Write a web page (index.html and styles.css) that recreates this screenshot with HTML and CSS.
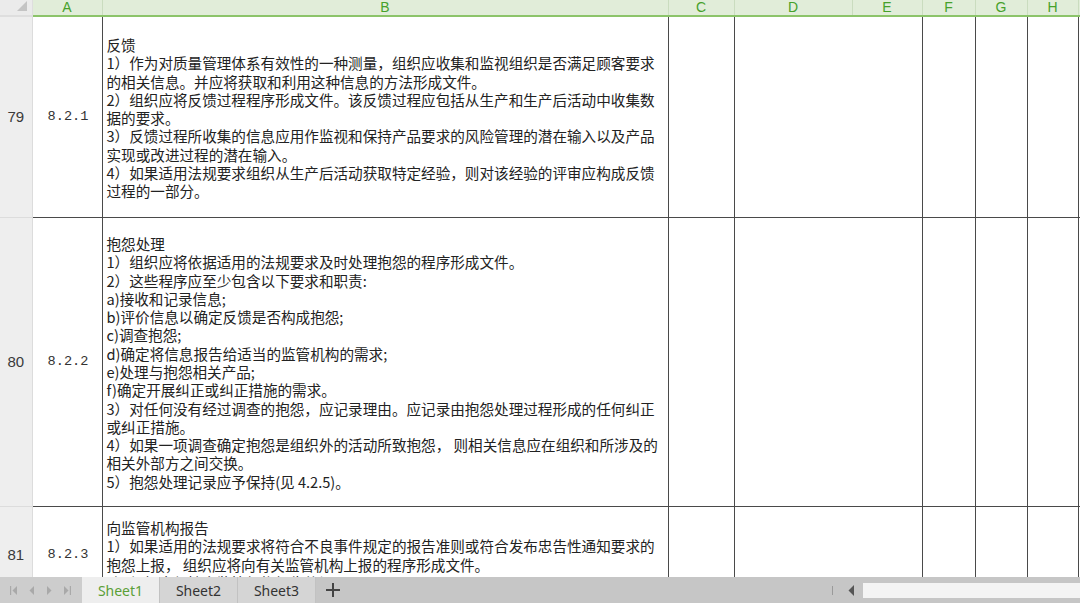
FILE: index.html
```html
<!DOCTYPE html>
<html lang="zh-CN">
<head>
    <meta charset="UTF-8">
    <title>Sheet1</title>
    <link rel="stylesheet" href="styles.css">
</head>
<body>
    <div class="workbook">
        <div class="grid">
            <table class="sheet">
                <colgroup>
                    <col class="w-rh">
                    <col class="w-a">
                    <col class="w-b">
                    <col class="w-c">
                    <col class="w-d">
                    <col class="w-e">
                    <col class="w-f">
                    <col class="w-g">
                    <col class="w-h">
                    <col class="w-i">
                </colgroup>
                <tr class="head">
                    <th class="corner">
                        <svg width="12" height="11" viewBox="0 0 12 11"><polygon points="11,0 11,10 1,10" fill="#c4c4c4"/></svg>
                    </th>
                    <th>A</th>
                    <th>B</th>
                    <th>C</th>
                    <th>D</th>
                    <th>E</th>
                    <th>F</th>
                    <th>G</th>
                    <th>H</th>
                    <th></th>
                </tr>

                <!-- 8.2.1 -->
                <tr class="r79">
                    <td class="rh">79</td>
                    <td class="code">8.2.1</td>
                    <td class="text">反馈<br>1）作为对质量管理体系有效性的一种测量，组织应收集和监视组织是否满足顾客要求<br>的相关信息。并应将获取和利用这种信息的方法形成文件。<br>2）组织应将反馈过程程序形成文件。该反馈过程应包括从生产和生产后活动中收集数<br>据的要求。<br>3）反馈过程所收集的信息应用作监视和保持产品要求的风险管理的潜在输入以及产品<br>实现或改进过程的潜在输入。<br>4）如果适用法规要求组织从生产后活动获取特定经验，则对该经验的评审应构成反馈<br>过程的一部分。</td>
                    <td></td>
                    <td colspan="2"></td>
                    <td></td>
                    <td></td>
                    <td></td>
                    <td></td>
                </tr>

                <!-- 8.2.2 -->
                <tr class="r80">
                    <td class="rh">80</td>
                    <td class="code">8.2.2</td>
                    <td class="text">抱怨处理<br>1）组织应将依据适用的法规要求及时处理抱怨的程序形成文件。<br>2）这些程序应至少包含以下要求和职责:<br>a)接收和记录信息;<br>b)评价信息以确定反馈是否构成抱怨;<br>c)调查抱怨;<br>d)确定将信息报告给适当的监管机构的需求;<br>e)处理与抱怨相关产品;<br>f)确定开展纠正或纠正措施的需求。<br>3）对任何没有经过调查的抱怨，应记录理由。应记录由抱怨处理过程形成的任何纠正<br>或纠正措施。<br>4）如果一项调查确定抱怨是组织外的活动所致抱怨， 则相关信息应在组织和所涉及的<br>相关外部方之间交换。<br>5）抱怨处理记录应予保持(见 4.2.5)。</td>
                    <td></td>
                    <td colspan="2"></td>
                    <td></td>
                    <td></td>
                    <td></td>
                    <td></td>
                </tr>

                <!-- 8.2.3 -->
                <tr class="r81">
                    <td class="rh">81</td>
                    <td class="code">8.2.3</td>
                    <td class="text">向监管机构报告<br>1）如果适用的法规要求将符合不良事件规定的报告准则或符合发布忠告性通知要求的<br>抱怨上报， 组织应将向有关监管机构上报的程序形成文件。<br>2）组织应保持向监管机构报告的记录。</td>
                    <td></td>
                    <td colspan="2"></td>
                    <td></td>
                    <td></td>
                    <td></td>
                    <td></td>
                </tr>
            </table>
        </div>

        <div class="tabbar">
            <div class="nav">
                <svg width="8" height="9" viewBox="0 0 8 9"><rect x="0" y="0" width="1.2" height="9" fill="#a9a9a9"/><polygon points="7,0 7,9 2.5,4.5" fill="#a9a9a9"/></svg>
                <svg width="6" height="9" viewBox="0 0 6 9"><polygon points="5,0 5,9 0.5,4.5" fill="#a9a9a9"/></svg>
                <svg width="6" height="9" viewBox="0 0 6 9"><polygon points="1,0 1,9 5.5,4.5" fill="#a9a9a9"/></svg>
                <svg width="8" height="9" viewBox="0 0 8 9"><polygon points="1,0 1,9 5.5,4.5" fill="#a9a9a9"/><rect x="6.8" y="0" width="1.2" height="9" fill="#a9a9a9"/></svg>
            </div>
            <div class="tab active">Sheet1</div>
            <div class="tab">Sheet2</div>
            <div class="tab">Sheet3</div>
            <div class="add">
                <svg width="14" height="14" viewBox="0 0 14 14"><path d="M7 0v14M0 7h14" stroke="#444" stroke-width="2"/></svg>
            </div>
            <div class="spacer"></div>
            <div class="hscroll">
                <span class="split"></span>
                <svg width="7" height="11" viewBox="0 0 7 11"><polygon points="6,0 6,11 0.5,5.5" fill="#555"/></svg>
                <div class="track"></div>
            </div>
        </div>
    </div>
</body>
</html>
```

FILE: styles.css
```css
* {
    margin: 0;
    padding: 0;
    box-sizing: border-box;
}

body {
    font-family: "Noto Sans CJK SC", sans-serif;
    background: #fff;
    color: #222;
    overflow: hidden;
}

.workbook {
    display: flex;
    flex-direction: column;
    width: 1080px;
    height: 603px;
}

.grid {
    flex: 1;
    overflow: hidden;
}

/* spreadsheet table */
.sheet {
    border-collapse: collapse;
    table-layout: fixed;
    width: 1108px;
}

.w-rh { width: 32px; }
.w-a { width: 70px; }
.w-b { width: 566px; }
.w-c { width: 66px; }
.w-d { width: 118px; }
.w-e { width: 70px; }
.w-f { width: 53px; }
.w-g { width: 52px; }
.w-h { width: 51px; }
.w-i { width: 30px; }

.head th {
    height: 16px;
    background: #e1edd9;
    color: #46a12b;
    font: normal 14px/14px "Liberation Sans", sans-serif;
    text-align: center;
    vertical-align: top;
    border-right: 1px solid #cadcbf;
    border-bottom: 2px solid #8cc46a;
}

.head th.corner {
    background: #ebebeb;
    border-right: 1px solid #dedede;
    border-bottom: 2px solid #dedede;
    text-align: right;
    padding: 1px 4px 0 0;
}

.head th.corner svg {
    display: block;
    margin-left: auto;
}

.sheet td {
    border-right: 1px solid #4a4a4a;
    border-bottom: 1px solid #4a4a4a;
    vertical-align: middle;
}

.sheet td.rh {
    background: #eeeeee;
    color: #3a3a3a;
    font: 15px "Liberation Sans", sans-serif;
    text-align: center;
    border-right: 1px solid #dcdcdc;
    border-bottom: 1px solid #dcdcdc;
}

.sheet td.code {
    font: 13.6px "Liberation Mono", monospace;
    color: #333;
    text-align: center;
    padding-left: 2px;
}

.sheet td.text {
    font-size: 14.6px;
    line-height: 18.3px;
    white-space: nowrap;
    padding: 3px 0 0 4px;
    color: #222;
}

.r79 { height: 201px; }
.r80 { height: 289px; }
.r81 { height: 96px; }

/* sheet tabs and scroll bar */
.tabbar {
    height: 26px;
    flex-shrink: 0;
    display: flex;
    background: #c6c6c6;
    font: 14px "Noto Sans", "Liberation Sans", sans-serif;
}

.nav {
    width: 82px;
    display: flex;
    align-items: center;
    gap: 11px;
    padding-left: 10px;
    background: #cdcdcd;
}

.tab {
    width: 78px;
    display: flex;
    align-items: center;
    justify-content: center;
    background: #d5d5d5;
    border-right: 1px solid #c2c2c2;
    color: #333;
}

.tab.active {
    background: #eeeeee;
    color: #5b9f37;
}

.add {
    width: 34px;
    display: flex;
    align-items: center;
    justify-content: center;
}

.spacer {
    flex: 1;
}

.hscroll {
    display: flex;
    align-items: center;
    width: 250px;
}

.split {
    width: 1px;
    height: 9px;
    background: #9a9a9a;
    margin: 0 15px 0 2px;
}

.hscroll svg {
    margin-right: 8px;
}

.track {
    flex: 1;
    height: 15px;
    background: #f4f4f4;
}
```
